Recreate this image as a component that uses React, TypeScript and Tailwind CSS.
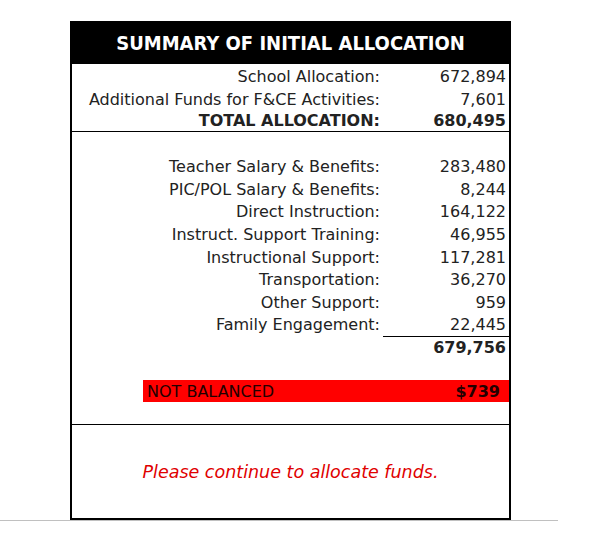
const font = { fontFamily: '"DejaVu Sans", "Liberation Sans", sans-serif' };
const condensed = { fontFamily: '"DejaVu Sans Condensed", "DejaVu Sans", sans-serif' };

const allocation = [
  { label: "School Allocation:", value: "672,894" },
  { label: "Additional Funds for F&CE Activities:", value: "7,601" },
];

const spending = [
  { label: "Teacher Salary & Benefits:", value: "283,480" },
  { label: "PIC/POL Salary & Benefits:", value: "8,244" },
  { label: "Direct Instruction:", value: "164,122" },
  { label: "Instruct. Support Training:", value: "46,955" },
  { label: "Instructional Support:", value: "117,281" },
  { label: "Transportation:", value: "36,270" },
  { label: "Other Support:", value: "959" },
];

function Row({
  label,
  value,
  bold,
  underline,
  height = "h-[22.6px]",
}: {
  label: string;
  value: string;
  bold?: boolean;
  underline?: boolean;
  height?: string;
}) {
  return (
    <div className={`flex ${height} items-center ${bold ? "font-bold" : ""}`}>
      <div className="w-[308px] whitespace-nowrap text-right">{label}</div>
      <div
        className={`ml-[3px] flex h-full w-[126px] items-center justify-end pr-[3px] ${
          underline ? "border-b border-black" : ""
        }`}
      >
        {value}
      </div>
    </div>
  );
}

export default function App() {
  return (
    <div className="min-h-[538px] bg-white" style={font}>
      <div className="w-[558px] border-b border-[#c0c0c0] pl-[70px] pt-[21px]">
        <div className="w-[441px] border-x-2 border-b-2 border-black text-[16px] text-[#222]">
          <div
            className="-mx-[2px] flex h-[43px] items-center justify-center bg-black text-[20px] font-bold text-white"
            style={condensed}
          >
            SUMMARY OF INITIAL ALLOCATION
          </div>

          <div className="border-b border-black pt-[1px]">
            {allocation.map((r) => (
              <Row key={r.label} label={r.label} value={r.value} height="h-[23px]" />
            ))}
            <Row label="TOTAL ALLOCATION:" value="680,495" bold height="h-[20px]" />
          </div>

          <div className="pt-[24px]">
            {spending.map((r) => (
              <Row key={r.label} label={r.label} value={r.value} />
            ))}
            <Row label="Family Engagement:" value="22,445" underline />
            <Row label="" value="679,756" bold />
          </div>

          <div className="ml-[71px] mt-[21px] flex h-[22px] items-center justify-between bg-[#ff0000] pl-[4px] pr-[9px] pt-[2px] text-[#200]">
            <span>NOT BALANCED</span>
            <span className="font-bold">$739</span>
          </div>

          <div className="mt-[22px] border-t border-black">
            <div className="flex h-[93px] items-center justify-center text-[17.5px] italic text-[#e00000]">
              Please continue to allocate funds.
            </div>
          </div>
        </div>
      </div>
    </div>
  );
}
